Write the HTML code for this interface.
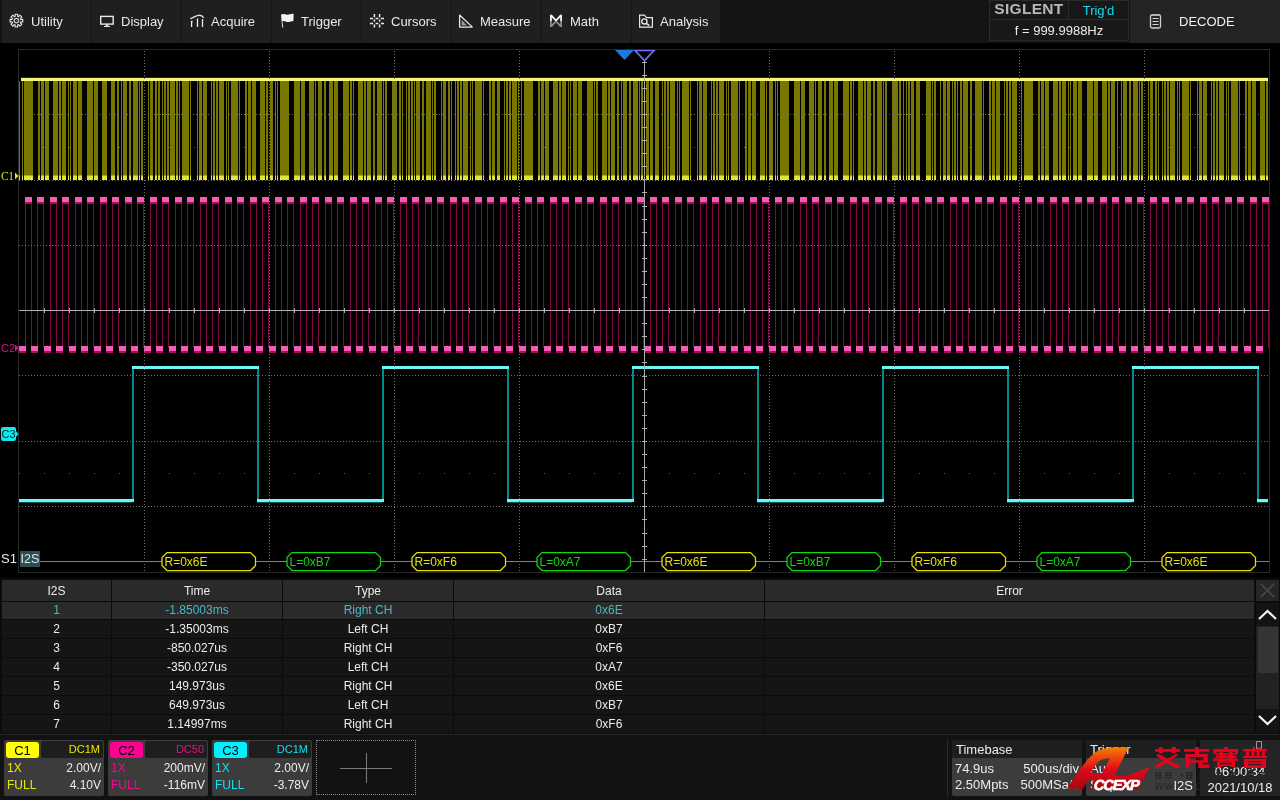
<!DOCTYPE html>
<html><head><meta charset="utf-8"><style>
html,body{margin:0;padding:0}
body{width:1280px;height:800px;background:#000;overflow:hidden;position:relative;font-family:"Liberation Sans", sans-serif}
div,span{box-sizing:border-box;white-space:nowrap}
#root{position:absolute;left:0;top:0;width:1280px;height:800px;will-change:transform}
</style></head><body><div id="root">
<div style="position:absolute;left:0;top:0;width:1280px;height:43px;background:#141414"></div>
<div style="position:absolute;left:2px;top:0;width:89px;height:43px;background:#1f1f1f"><svg width="30" height="43" viewBox="0 0 30 43" style="position:absolute;left:0;top:0"><path d="M13.05 14.24L15.75 14.24L15.60 16.26L16.62 16.68L17.94 15.15L19.85 17.06L18.32 18.38L18.74 19.40L20.76 19.25L20.76 21.95L18.74 21.80L18.32 22.82L19.85 24.14L17.94 26.05L16.62 24.52L15.60 24.94L15.75 26.96L13.05 26.96L13.20 24.94L12.18 24.52L10.86 26.05L8.95 24.14L10.48 22.82L10.06 21.80L8.04 21.95L8.04 19.25L10.06 19.40L10.48 18.38L8.95 17.06L10.86 15.15L12.18 16.68L13.20 16.26Z" fill="none" stroke="#e8e8e8" stroke-width="1.1" stroke-linejoin="round"/><circle cx="14.4" cy="20.6" r="2.2" fill="none" stroke="#c8c8c8" stroke-width="1.3"/><circle cx="14.4" cy="20.6" r="0.5" fill="#777"/></svg><span style="position:absolute;left:29px;top:13px;font-size:13px;line-height:17px;color:#e8e8e8">Utility</span></div>
<div style="position:absolute;left:92px;top:0;width:89px;height:43px;background:#1f1f1f"><svg width="30" height="43" viewBox="0 0 30 43" style="position:absolute;left:0;top:0"><rect x="8.7" y="16.4" width="12.5" height="7.7" fill="none" stroke="#e8e8e8" stroke-width="1.4"/><path d="M13.8 24.5h2.4v1.6h-2.4z M12 26.1h6v1h-6z" fill="#e8e8e8"/></svg><span style="position:absolute;left:29px;top:13px;font-size:13px;line-height:17px;color:#e8e8e8">Display</span></div>
<div style="position:absolute;left:182px;top:0;width:89px;height:43px;background:#1f1f1f"><svg width="30" height="43" viewBox="0 0 30 43" style="position:absolute;left:0;top:0"><path d="M8.3 18.6C11 18 13.5 15.6 16.8 15.3C19 15.1 20.8 16.3 21.7 17.9" fill="none" stroke="#e0e0e0" stroke-width="1.3"/><path d="M9.6 21V27M15.5 18.4V27M20.5 19V27" stroke="#ececec" stroke-width="1.3"/><path d="M8.8 21.3h1.8" stroke="#ececec" stroke-width="1"/></svg><span style="position:absolute;left:29px;top:13px;font-size:13px;line-height:17px;color:#e8e8e8">Acquire</span></div>
<div style="position:absolute;left:272px;top:0;width:89px;height:43px;background:#1f1f1f"><svg width="30" height="43" viewBox="0 0 30 43" style="position:absolute;left:0;top:0"><path d="M9 14.6C10.8 13.6 12.5 13.8 14.3 14.5C16.5 15.3 18.8 13.3 21.7 13.9L21.4 21.2C18.8 20.9 16.6 22.5 14.3 21.7C12.5 21 11 20.6 10.4 21.2L11.2 27.5H10.2Z" fill="#f4f4f4"/></svg><span style="position:absolute;left:29px;top:13px;font-size:13px;line-height:17px;color:#e8e8e8">Trigger</span></div>
<div style="position:absolute;left:362px;top:0;width:89px;height:43px;background:#1f1f1f"><svg width="30" height="43" viewBox="0 0 30 43" style="position:absolute;left:0;top:0"><g stroke="#ececec" stroke-width="1.5"><path d="M12.4 14v3.2M12.4 19.6v2.2M12.4 24.6v2.9M17.6 14v3.2M17.6 19.6v2.2M17.6 24.6v2.9M7.9 18.4h3.2M13.6 18.4h2.8M18.9 18.4h3.1M7.9 23.6h3.2M13.6 23.6h2.8M18.9 23.6h3.1"/></g></svg><span style="position:absolute;left:29px;top:13px;font-size:13px;line-height:17px;color:#e8e8e8">Cursors</span></div>
<div style="position:absolute;left:452px;top:0;width:89px;height:43px;background:#1f1f1f"><svg width="30" height="43" viewBox="0 0 30 43" style="position:absolute;left:0;top:0"><path d="M7.6 15V27.1H20.4Z" fill="none" stroke="#ececec" stroke-width="1.3" stroke-linejoin="bevel"/><path d="M9.6 19.8V25.4H15Z" fill="#9a9a9a"/></svg><span style="position:absolute;left:28px;top:13px;font-size:13px;line-height:17px;color:#e8e8e8">Measure</span></div>
<div style="position:absolute;left:542px;top:0;width:89px;height:43px;background:#1f1f1f"><svg width="30" height="43" viewBox="0 0 30 43" style="position:absolute;left:0;top:0"><path d="M8 21V14.8H9.9L14 19.2L18.1 14.8H20V21H18.2V17.6L14.8 21H13.2L9.8 17.6V21Z" fill="#f4f4f4"/><path d="M8 21V26.9H9.9L14 22.6L18.1 26.9H20V21H18.2V24.2L14.8 21H13.2L9.8 24.2V21Z" fill="#8c8c8c"/></svg><span style="position:absolute;left:28px;top:13px;font-size:13px;line-height:17px;color:#e8e8e8">Math</span></div>
<div style="position:absolute;left:632px;top:0;width:88px;height:43px;background:#1f1f1f"><svg width="30" height="43" viewBox="0 0 30 43" style="position:absolute;left:0;top:0"><path d="M7.6 15.2H12.3L14.6 17.6H20.4V27.1H7.6Z" fill="none" stroke="#e8e8e8" stroke-width="1.2"/><circle cx="12.4" cy="21.4" r="2.6" fill="none" stroke="#e8e8e8" stroke-width="1.3"/><path d="M14.2 23.3L17.4 25.6" stroke="#e8e8e8" stroke-width="1.5"/></svg><span style="position:absolute;left:28px;top:13px;font-size:13px;line-height:17px;color:#e8e8e8">Analysis</span></div>
<div style="position:absolute;left:989px;top:0;width:140px;height:41px;background:#2a2a2a"></div>
<div style="position:absolute;left:990px;top:1px;width:78px;height:18px;background:#181818"></div>
<div style="position:absolute;left:1069px;top:1px;width:59px;height:18px;background:#181818"></div>
<div style="position:absolute;left:990px;top:20px;width:138px;height:20px;background:#181818"></div>
<div style="position:absolute;left:992px;top:0px;width:74px;height:18px;font-weight:bold;font-size:15.5px;line-height:18px;color:#b8b8b8;text-align:center;letter-spacing:0.3px">SIGLENT</div>
<div style="position:absolute;left:1069px;top:2px;width:59px;height:18px;font-size:13px;line-height:18px;color:#12dcea;text-align:center">Trig'd</div>
<div style="position:absolute;left:990px;top:21px;width:138px;height:19px;font-size:13px;line-height:19px;color:#ececec;text-align:center">f = 999.9988Hz</div>
<div style="position:absolute;left:1130px;top:0;width:150px;height:43px;background:#242424"><svg width="14" height="16" viewBox="0 0 14 16" style="position:absolute;left:19px;top:13px"><rect x="1.5" y="2" width="10" height="13" rx="1.5" fill="none" stroke="#d0d0d0" stroke-width="1.3"/><path d="M3.5 5.5h6M3.5 8.5h6M3.5 11.5h6" stroke="#d0d0d0" stroke-width="1.2"/><path d="M4 1v1.5M6.5 1v1.5M9 1v1.5" stroke="#d0d0d0" stroke-width="1"/></svg><span style="position:absolute;left:49px;top:13px;font-size:13px;line-height:17px;color:#f0f0f0">DECODE</span></div>
<svg width="1280" height="580" viewBox="0 0 1280 580" style="position:absolute;left:0;top:0">
<path d="M19 81h1v95h-1z M22 81h1v95h-1z M24 81h9v95h-9z M38 81h2v95h-2z M41 81h3v95h-3z M45 81h4v95h-4z M53 81h5v95h-5z M59 81h2v95h-2z M62 81h4v95h-4z M68 81h1v95h-1z M70 81h1v95h-1z M73 81h4v95h-4z M78 81h4v95h-4z M87 81h6v95h-6z M94 81h4v95h-4z M102 81h5v95h-5z M111 81h4v95h-4z M117 81h2v95h-2z M121 81h1v95h-1z M123 81h4v95h-4z M129 81h2v95h-2z M133 81h5v95h-5z M139 81h1v95h-1z M141 81h2v95h-2z M148 81h1v95h-1z M150 81h3v95h-3z M155 81h2v95h-2z M158 81h2v95h-2z M162 81h1v95h-1z M164 81h2v95h-2z M167 81h2v95h-2z M170 81h5v95h-5z M176 81h2v95h-2z M179 81h1v95h-1z M182 81h7v95h-7z M190 81h1v95h-1z M197 81h1v95h-1z M199 81h3v95h-3z M203 81h4v95h-4z M211 81h1v95h-1z M213 81h2v95h-2z M216 81h2v95h-2z M219 81h5v95h-5z M226 81h1v95h-1z M228 81h1v95h-1z M231 81h7v95h-7z M239 81h1v95h-1z M245 81h2v95h-2z M248 81h3v95h-3z M252 81h4v95h-4z M260 81h5v95h-5z M266 81h2v95h-2z M270 81h3v95h-3z M275 81h1v95h-1z M277 81h1v95h-1z M280 81h9v95h-9z M294 81h6v95h-6z M301 81h4v95h-4z M309 81h5v95h-5z M315 81h1v95h-1z M318 81h4v95h-4z M324 81h2v95h-2z M329 81h4v95h-4z M334 81h4v95h-4z M343 81h6v95h-6z M350 81h2v95h-2z M353 81h1v95h-1z M358 81h5v95h-5z M364 81h2v95h-2z M367 81h4v95h-4z M373 81h2v95h-2z M377 81h5v95h-5z M383 81h1v95h-1z M385 81h2v95h-2z M392 81h5v95h-5z M399 81h2v95h-2z M402 81h1v95h-1z M406 81h1v95h-1z M408 81h2v95h-2z M411 81h2v95h-2z M414 81h1v95h-1z M416 81h4v95h-4z M422 81h2v95h-2z M426 81h5v95h-5z M432 81h1v95h-1z M434 81h2v95h-2z M441 81h1v95h-1z M443 81h3v95h-3z M448 81h2v95h-2z M451 81h1v95h-1z M455 81h1v95h-1z M457 81h2v95h-2z M460 81h2v95h-2z M463 81h5v95h-5z M470 81h1v95h-1z M472 81h1v95h-1z M475 81h7v95h-7z M483 81h1v95h-1z M489 81h2v95h-2z M492 81h3v95h-3z M497 81h3v95h-3z M504 81h1v95h-1z M506 81h2v95h-2z M509 81h2v95h-2z M512 81h5v95h-5z M518 81h1v95h-1z M521 81h1v95h-1z M524 81h9v95h-9z M538 81h2v95h-2z M541 81h3v95h-3z M545 81h4v95h-4z M553 81h5v95h-5z M559 81h2v95h-2z M562 81h4v95h-4z M568 81h1v95h-1z M570 81h1v95h-1z M573 81h4v95h-4z M578 81h4v95h-4z M587 81h6v95h-6z M594 81h1v95h-1z M596 81h2v95h-2z M602 81h5v95h-5z M608 81h2v95h-2z M611 81h4v95h-4z M617 81h2v95h-2z M621 81h1v95h-1z M623 81h4v95h-4z M629 81h2v95h-2z M633 81h5v95h-5z M639 81h1v95h-1z M641 81h2v95h-2z M646 81h3v95h-3z M650 81h3v95h-3z M655 81h4v95h-4z M662 81h1v95h-1z M664 81h2v95h-2z M667 81h2v95h-2z M670 81h5v95h-5z M677 81h1v95h-1z M679 81h1v95h-1z M682 81h7v95h-7z M690 81h1v95h-1z M697 81h1v95h-1z M699 81h3v95h-3z M703 81h4v95h-4z M711 81h1v95h-1z M713 81h2v95h-2z M716 81h2v95h-2z M719 81h5v95h-5z M726 81h1v95h-1z M728 81h1v95h-1z M731 81h7v95h-7z M739 81h1v95h-1z M745 81h2v95h-2z M748 81h3v95h-3z M752 81h4v95h-4z M760 81h5v95h-5z M766 81h1v95h-1z M769 81h4v95h-4z M775 81h1v95h-1z M777 81h1v95h-1z M780 81h9v95h-9z M794 81h6v95h-6z M801 81h4v95h-4z M809 81h5v95h-5z M815 81h1v95h-1z M818 81h4v95h-4z M824 81h2v95h-2z M829 81h4v95h-4z M834 81h4v95h-4z M843 81h6v95h-6z M850 81h2v95h-2z M853 81h1v95h-1z M858 81h5v95h-5z M864 81h2v95h-2z M867 81h4v95h-4z M873 81h2v95h-2z M877 81h5v95h-5z M883 81h1v95h-1z M885 81h2v95h-2z M892 81h6v95h-6z M899 81h2v95h-2z M903 81h1v95h-1z M906 81h1v95h-1z M908 81h2v95h-2z M911 81h3v95h-3z M916 81h4v95h-4z M926 81h5v95h-5z M932 81h1v95h-1z M934 81h2v95h-2z M940 81h1v95h-1z M943 81h3v95h-3z M947 81h3v95h-3z M952 81h1v95h-1z M954 81h2v95h-2z M957 81h1v95h-1z M960 81h2v95h-2z M963 81h5v95h-5z M970 81h2v95h-2z M975 81h7v95h-7z M983 81h1v95h-1z M989 81h2v95h-2z M992 81h3v95h-3z M996 81h4v95h-4z M1004 81h1v95h-1z M1006 81h2v95h-2z M1009 81h2v95h-2z M1012 81h5v95h-5z M1021 81h1v95h-1z M1024 81h9v95h-9z M1038 81h2v95h-2z M1041 81h3v95h-3z M1045 81h4v95h-4z M1053 81h5v95h-5z M1059 81h2v95h-2z M1062 81h4v95h-4z M1068 81h1v95h-1z M1070 81h1v95h-1z M1073 81h4v95h-4z M1078 81h4v95h-4z M1087 81h6v95h-6z M1094 81h4v95h-4z M1102 81h5v95h-5z M1108 81h2v95h-2z M1111 81h4v95h-4z M1117 81h1v95h-1z M1121 81h1v95h-1z M1123 81h4v95h-4z M1129 81h2v95h-2z M1133 81h5v95h-5z M1139 81h1v95h-1z M1141 81h2v95h-2z M1148 81h1v95h-1z M1150 81h3v95h-3z M1155 81h2v95h-2z M1158 81h1v95h-1z M1162 81h1v95h-1z M1164 81h2v95h-2z M1167 81h2v95h-2z M1170 81h5v95h-5z M1177 81h1v95h-1z M1179 81h1v95h-1z M1182 81h7v95h-7z M1190 81h1v95h-1z M1197 81h1v95h-1z M1199 81h3v95h-3z M1203 81h4v95h-4z M1211 81h1v95h-1z M1213 81h2v95h-2z M1216 81h2v95h-2z M1219 81h5v95h-5z M1226 81h1v95h-1z M1228 81h1v95h-1z M1231 81h7v95h-7z M1239 81h1v95h-1z M1245 81h2v95h-2z M1248 81h3v95h-3z M1252 81h4v95h-4z M1260 81h5v95h-5z M1266 81h2v95h-2z" fill="#787800"/>
<path d="M19 175.5h1v4.5h-1z M22 175.5h1v4.5h-1z M24 175.5h9v4.5h-9z M38 175.5h2v4.5h-2z M41 175.5h3v4.5h-3z M45 175.5h4v4.5h-4z M53 175.5h5v4.5h-5z M59 175.5h2v4.5h-2z M62 175.5h4v4.5h-4z M68 175.5h1v4.5h-1z M70 175.5h1v4.5h-1z M73 175.5h4v4.5h-4z M78 175.5h4v4.5h-4z M87 175.5h6v4.5h-6z M94 175.5h4v4.5h-4z M102 175.5h5v4.5h-5z M111 175.5h4v4.5h-4z M117 175.5h2v4.5h-2z M121 175.5h1v4.5h-1z M123 175.5h4v4.5h-4z M129 175.5h2v4.5h-2z M133 175.5h5v4.5h-5z M139 175.5h1v4.5h-1z M141 175.5h2v4.5h-2z M148 175.5h1v4.5h-1z M150 175.5h3v4.5h-3z M155 175.5h2v4.5h-2z M158 175.5h2v4.5h-2z M162 175.5h1v4.5h-1z M164 175.5h2v4.5h-2z M167 175.5h2v4.5h-2z M170 175.5h5v4.5h-5z M176 175.5h2v4.5h-2z M179 175.5h1v4.5h-1z M182 175.5h7v4.5h-7z M190 175.5h1v4.5h-1z M197 175.5h1v4.5h-1z M199 175.5h3v4.5h-3z M203 175.5h4v4.5h-4z M211 175.5h1v4.5h-1z M213 175.5h2v4.5h-2z M216 175.5h2v4.5h-2z M219 175.5h5v4.5h-5z M226 175.5h1v4.5h-1z M228 175.5h1v4.5h-1z M231 175.5h7v4.5h-7z M239 175.5h1v4.5h-1z M245 175.5h2v4.5h-2z M248 175.5h3v4.5h-3z M252 175.5h4v4.5h-4z M260 175.5h5v4.5h-5z M266 175.5h2v4.5h-2z M270 175.5h3v4.5h-3z M275 175.5h1v4.5h-1z M277 175.5h1v4.5h-1z M280 175.5h9v4.5h-9z M294 175.5h6v4.5h-6z M301 175.5h4v4.5h-4z M309 175.5h5v4.5h-5z M315 175.5h1v4.5h-1z M318 175.5h4v4.5h-4z M324 175.5h2v4.5h-2z M329 175.5h4v4.5h-4z M334 175.5h4v4.5h-4z M343 175.5h6v4.5h-6z M350 175.5h2v4.5h-2z M353 175.5h1v4.5h-1z M358 175.5h5v4.5h-5z M364 175.5h2v4.5h-2z M367 175.5h4v4.5h-4z M373 175.5h2v4.5h-2z M377 175.5h5v4.5h-5z M383 175.5h1v4.5h-1z M385 175.5h2v4.5h-2z M392 175.5h5v4.5h-5z M399 175.5h2v4.5h-2z M402 175.5h1v4.5h-1z M406 175.5h1v4.5h-1z M408 175.5h2v4.5h-2z M411 175.5h2v4.5h-2z M414 175.5h1v4.5h-1z M416 175.5h4v4.5h-4z M422 175.5h2v4.5h-2z M426 175.5h5v4.5h-5z M432 175.5h1v4.5h-1z M434 175.5h2v4.5h-2z M441 175.5h1v4.5h-1z M443 175.5h3v4.5h-3z M448 175.5h2v4.5h-2z M451 175.5h1v4.5h-1z M455 175.5h1v4.5h-1z M457 175.5h2v4.5h-2z M460 175.5h2v4.5h-2z M463 175.5h5v4.5h-5z M470 175.5h1v4.5h-1z M472 175.5h1v4.5h-1z M475 175.5h7v4.5h-7z M483 175.5h1v4.5h-1z M489 175.5h2v4.5h-2z M492 175.5h3v4.5h-3z M497 175.5h3v4.5h-3z M504 175.5h1v4.5h-1z M506 175.5h2v4.5h-2z M509 175.5h2v4.5h-2z M512 175.5h5v4.5h-5z M518 175.5h1v4.5h-1z M521 175.5h1v4.5h-1z M524 175.5h9v4.5h-9z M538 175.5h2v4.5h-2z M541 175.5h3v4.5h-3z M545 175.5h4v4.5h-4z M553 175.5h5v4.5h-5z M559 175.5h2v4.5h-2z M562 175.5h4v4.5h-4z M568 175.5h1v4.5h-1z M570 175.5h1v4.5h-1z M573 175.5h4v4.5h-4z M578 175.5h4v4.5h-4z M587 175.5h6v4.5h-6z M594 175.5h1v4.5h-1z M596 175.5h2v4.5h-2z M602 175.5h5v4.5h-5z M608 175.5h2v4.5h-2z M611 175.5h4v4.5h-4z M617 175.5h2v4.5h-2z M621 175.5h1v4.5h-1z M623 175.5h4v4.5h-4z M629 175.5h2v4.5h-2z M633 175.5h5v4.5h-5z M639 175.5h1v4.5h-1z M641 175.5h2v4.5h-2z M646 175.5h3v4.5h-3z M650 175.5h3v4.5h-3z M655 175.5h4v4.5h-4z M662 175.5h1v4.5h-1z M664 175.5h2v4.5h-2z M667 175.5h2v4.5h-2z M670 175.5h5v4.5h-5z M677 175.5h1v4.5h-1z M679 175.5h1v4.5h-1z M682 175.5h7v4.5h-7z M690 175.5h1v4.5h-1z M697 175.5h1v4.5h-1z M699 175.5h3v4.5h-3z M703 175.5h4v4.5h-4z M711 175.5h1v4.5h-1z M713 175.5h2v4.5h-2z M716 175.5h2v4.5h-2z M719 175.5h5v4.5h-5z M726 175.5h1v4.5h-1z M728 175.5h1v4.5h-1z M731 175.5h7v4.5h-7z M739 175.5h1v4.5h-1z M745 175.5h2v4.5h-2z M748 175.5h3v4.5h-3z M752 175.5h4v4.5h-4z M760 175.5h5v4.5h-5z M766 175.5h1v4.5h-1z M769 175.5h4v4.5h-4z M775 175.5h1v4.5h-1z M777 175.5h1v4.5h-1z M780 175.5h9v4.5h-9z M794 175.5h6v4.5h-6z M801 175.5h4v4.5h-4z M809 175.5h5v4.5h-5z M815 175.5h1v4.5h-1z M818 175.5h4v4.5h-4z M824 175.5h2v4.5h-2z M829 175.5h4v4.5h-4z M834 175.5h4v4.5h-4z M843 175.5h6v4.5h-6z M850 175.5h2v4.5h-2z M853 175.5h1v4.5h-1z M858 175.5h5v4.5h-5z M864 175.5h2v4.5h-2z M867 175.5h4v4.5h-4z M873 175.5h2v4.5h-2z M877 175.5h5v4.5h-5z M883 175.5h1v4.5h-1z M885 175.5h2v4.5h-2z M892 175.5h6v4.5h-6z M899 175.5h2v4.5h-2z M903 175.5h1v4.5h-1z M906 175.5h1v4.5h-1z M908 175.5h2v4.5h-2z M911 175.5h3v4.5h-3z M916 175.5h4v4.5h-4z M926 175.5h5v4.5h-5z M932 175.5h1v4.5h-1z M934 175.5h2v4.5h-2z M940 175.5h1v4.5h-1z M943 175.5h3v4.5h-3z M947 175.5h3v4.5h-3z M952 175.5h1v4.5h-1z M954 175.5h2v4.5h-2z M957 175.5h1v4.5h-1z M960 175.5h2v4.5h-2z M963 175.5h5v4.5h-5z M970 175.5h2v4.5h-2z M975 175.5h7v4.5h-7z M983 175.5h1v4.5h-1z M989 175.5h2v4.5h-2z M992 175.5h3v4.5h-3z M996 175.5h4v4.5h-4z M1004 175.5h1v4.5h-1z M1006 175.5h2v4.5h-2z M1009 175.5h2v4.5h-2z M1012 175.5h5v4.5h-5z M1021 175.5h1v4.5h-1z M1024 175.5h9v4.5h-9z M1038 175.5h2v4.5h-2z M1041 175.5h3v4.5h-3z M1045 175.5h4v4.5h-4z M1053 175.5h5v4.5h-5z M1059 175.5h2v4.5h-2z M1062 175.5h4v4.5h-4z M1068 175.5h1v4.5h-1z M1070 175.5h1v4.5h-1z M1073 175.5h4v4.5h-4z M1078 175.5h4v4.5h-4z M1087 175.5h6v4.5h-6z M1094 175.5h4v4.5h-4z M1102 175.5h5v4.5h-5z M1108 175.5h2v4.5h-2z M1111 175.5h4v4.5h-4z M1117 175.5h1v4.5h-1z M1121 175.5h1v4.5h-1z M1123 175.5h4v4.5h-4z M1129 175.5h2v4.5h-2z M1133 175.5h5v4.5h-5z M1139 175.5h1v4.5h-1z M1141 175.5h2v4.5h-2z M1148 175.5h1v4.5h-1z M1150 175.5h3v4.5h-3z M1155 175.5h2v4.5h-2z M1158 175.5h1v4.5h-1z M1162 175.5h1v4.5h-1z M1164 175.5h2v4.5h-2z M1167 175.5h2v4.5h-2z M1170 175.5h5v4.5h-5z M1177 175.5h1v4.5h-1z M1179 175.5h1v4.5h-1z M1182 175.5h7v4.5h-7z M1190 175.5h1v4.5h-1z M1197 175.5h1v4.5h-1z M1199 175.5h3v4.5h-3z M1203 175.5h4v4.5h-4z M1211 175.5h1v4.5h-1z M1213 175.5h2v4.5h-2z M1216 175.5h2v4.5h-2z M1219 175.5h5v4.5h-5z M1226 175.5h1v4.5h-1z M1228 175.5h1v4.5h-1z M1231 175.5h7v4.5h-7z M1239 175.5h1v4.5h-1z M1245 175.5h2v4.5h-2z M1248 175.5h3v4.5h-3z M1252 175.5h4v4.5h-4z M1260 175.5h5v4.5h-5z M1266 175.5h2v4.5h-2z" fill="#e4e434"/>
<rect x="21" y="78" width="1247" height="3" fill="#f6f678"/><rect x="21" y="77" width="1247" height="1" fill="#f6f678" opacity="0.15"/>
<path d="M25.5 200v148 M31.5 200v148 M37.5 200v148 M43.5 200v148 M50.5 200v148 M56.5 200v148 M62.5 200v148 M68.5 200v148 M75.5 200v148 M81.5 200v148 M87.5 200v148 M93.5 200v148 M100.5 200v148 M106.5 200v148 M112.5 200v148 M118.5 200v148 M125.5 200v148 M131.5 200v148 M137.5 200v148 M143.5 200v148 M150.5 200v148 M156.5 200v148 M162.5 200v148 M168.5 200v148 M175.5 200v148 M181.5 200v148 M187.5 200v148 M193.5 200v148 M200.5 200v148 M206.5 200v148 M212.5 200v148 M218.5 200v148 M225.5 200v148 M231.5 200v148 M237.5 200v148 M243.5 200v148 M250.5 200v148 M256.5 200v148 M262.5 200v148 M268.5 200v148 M275.5 200v148 M281.5 200v148 M287.5 200v148 M293.5 200v148 M300.5 200v148 M306.5 200v148 M312.5 200v148 M318.5 200v148 M325.5 200v148 M331.5 200v148 M337.5 200v148 M343.5 200v148 M350.5 200v148 M356.5 200v148 M362.5 200v148 M368.5 200v148 M375.5 200v148 M381.5 200v148 M387.5 200v148 M393.5 200v148 M400.5 200v148 M406.5 200v148 M412.5 200v148 M418.5 200v148 M425.5 200v148 M431.5 200v148 M437.5 200v148 M443.5 200v148 M450.5 200v148 M456.5 200v148 M462.5 200v148 M468.5 200v148 M475.5 200v148 M481.5 200v148 M487.5 200v148 M493.5 200v148 M500.5 200v148 M506.5 200v148 M512.5 200v148 M518.5 200v148 M525.5 200v148 M531.5 200v148 M537.5 200v148 M543.5 200v148 M550.5 200v148 M556.5 200v148 M562.5 200v148 M568.5 200v148 M575.5 200v148 M581.5 200v148 M587.5 200v148 M593.5 200v148 M600.5 200v148 M606.5 200v148 M612.5 200v148 M618.5 200v148 M625.5 200v148 M631.5 200v148 M637.5 200v148 M643.5 200v148 M650.5 200v148 M656.5 200v148 M662.5 200v148 M668.5 200v148 M675.5 200v148 M681.5 200v148 M687.5 200v148 M693.5 200v148 M700.5 200v148 M706.5 200v148 M712.5 200v148 M718.5 200v148 M725.5 200v148 M731.5 200v148 M737.5 200v148 M743.5 200v148 M750.5 200v148 M756.5 200v148 M762.5 200v148 M768.5 200v148 M775.5 200v148 M781.5 200v148 M787.5 200v148 M793.5 200v148 M800.5 200v148 M806.5 200v148 M812.5 200v148 M818.5 200v148 M825.5 200v148 M831.5 200v148 M837.5 200v148 M843.5 200v148 M850.5 200v148 M856.5 200v148 M862.5 200v148 M868.5 200v148 M875.5 200v148 M881.5 200v148 M887.5 200v148 M893.5 200v148 M900.5 200v148 M906.5 200v148 M912.5 200v148 M918.5 200v148 M925.5 200v148 M931.5 200v148 M937.5 200v148 M943.5 200v148 M950.5 200v148 M956.5 200v148 M962.5 200v148 M968.5 200v148 M975.5 200v148 M981.5 200v148 M987.5 200v148 M993.5 200v148 M1000.5 200v148 M1006.5 200v148 M1012.5 200v148 M1018.5 200v148 M1025.5 200v148 M1031.5 200v148 M1037.5 200v148 M1043.5 200v148 M1050.5 200v148 M1056.5 200v148 M1062.5 200v148 M1068.5 200v148 M1075.5 200v148 M1081.5 200v148 M1087.5 200v148 M1093.5 200v148 M1100.5 200v148 M1106.5 200v148 M1112.5 200v148 M1118.5 200v148 M1125.5 200v148 M1131.5 200v148 M1137.5 200v148 M1143.5 200v148 M1150.5 200v148 M1156.5 200v148 M1162.5 200v148 M1168.5 200v148 M1175.5 200v148 M1181.5 200v148 M1187.5 200v148 M1193.5 200v148 M1200.5 200v148 M1206.5 200v148 M1212.5 200v148 M1218.5 200v148 M1225.5 200v148 M1231.5 200v148 M1237.5 200v148 M1243.5 200v148 M1250.5 200v148 M1256.5 200v148 M1262.5 200v148 M1268.5 200v148" stroke="#800846" stroke-width="1" fill="none" shape-rendering="crispEdges"/>
<path d="M25 202h7v2h-7z M37 202h7v2h-7z M50 202h7v2h-7z M62 202h7v2h-7z M75 202h7v2h-7z M87 202h7v2h-7z M100 202h7v2h-7z M112 202h7v2h-7z M125 202h7v2h-7z M137 202h7v2h-7z M150 202h7v2h-7z M162 202h7v2h-7z M175 202h7v2h-7z M187 202h7v2h-7z M200 202h7v2h-7z M212 202h7v2h-7z M225 202h7v2h-7z M237 202h7v2h-7z M250 202h7v2h-7z M262 202h7v2h-7z M275 202h7v2h-7z M287 202h7v2h-7z M300 202h7v2h-7z M312 202h7v2h-7z M325 202h7v2h-7z M337 202h7v2h-7z M350 202h7v2h-7z M362 202h7v2h-7z M375 202h7v2h-7z M387 202h7v2h-7z M400 202h7v2h-7z M412 202h7v2h-7z M425 202h7v2h-7z M437 202h7v2h-7z M450 202h7v2h-7z M462 202h7v2h-7z M475 202h7v2h-7z M487 202h7v2h-7z M500 202h7v2h-7z M512 202h7v2h-7z M525 202h7v2h-7z M537 202h7v2h-7z M550 202h7v2h-7z M562 202h7v2h-7z M575 202h7v2h-7z M587 202h7v2h-7z M600 202h7v2h-7z M612 202h7v2h-7z M625 202h7v2h-7z M637 202h7v2h-7z M650 202h7v2h-7z M662 202h7v2h-7z M675 202h7v2h-7z M687 202h7v2h-7z M700 202h7v2h-7z M712 202h7v2h-7z M725 202h7v2h-7z M737 202h7v2h-7z M750 202h7v2h-7z M762 202h7v2h-7z M775 202h7v2h-7z M787 202h7v2h-7z M800 202h7v2h-7z M812 202h7v2h-7z M825 202h7v2h-7z M837 202h7v2h-7z M850 202h7v2h-7z M862 202h7v2h-7z M875 202h7v2h-7z M887 202h7v2h-7z M900 202h7v2h-7z M912 202h7v2h-7z M925 202h7v2h-7z M937 202h7v2h-7z M950 202h7v2h-7z M962 202h7v2h-7z M975 202h7v2h-7z M987 202h7v2h-7z M1000 202h7v2h-7z M1012 202h7v2h-7z M1025 202h7v2h-7z M1037 202h7v2h-7z M1050 202h7v2h-7z M1062 202h7v2h-7z M1075 202h7v2h-7z M1087 202h7v2h-7z M1100 202h7v2h-7z M1112 202h7v2h-7z M1125 202h7v2h-7z M1137 202h7v2h-7z M1150 202h7v2h-7z M1162 202h7v2h-7z M1175 202h7v2h-7z M1187 202h7v2h-7z M1200 202h7v2h-7z M1212 202h7v2h-7z M1225 202h7v2h-7z M1237 202h7v2h-7z M1250 202h7v2h-7z M1262 202h7v2h-7z M19 350.5h7v2h-7z M31 350.5h7v2h-7z M44 350.5h7v2h-7z M56 350.5h7v2h-7z M69 350.5h7v2h-7z M81 350.5h7v2h-7z M94 350.5h7v2h-7z M106 350.5h7v2h-7z M119 350.5h7v2h-7z M131 350.5h7v2h-7z M144 350.5h7v2h-7z M156 350.5h7v2h-7z M169 350.5h7v2h-7z M181 350.5h7v2h-7z M194 350.5h7v2h-7z M206 350.5h7v2h-7z M219 350.5h7v2h-7z M231 350.5h7v2h-7z M244 350.5h7v2h-7z M256 350.5h7v2h-7z M269 350.5h7v2h-7z M281 350.5h7v2h-7z M294 350.5h7v2h-7z M306 350.5h7v2h-7z M319 350.5h7v2h-7z M331 350.5h7v2h-7z M344 350.5h7v2h-7z M356 350.5h7v2h-7z M369 350.5h7v2h-7z M381 350.5h7v2h-7z M394 350.5h7v2h-7z M406 350.5h7v2h-7z M419 350.5h7v2h-7z M431 350.5h7v2h-7z M444 350.5h7v2h-7z M456 350.5h7v2h-7z M469 350.5h7v2h-7z M481 350.5h7v2h-7z M494 350.5h7v2h-7z M506 350.5h7v2h-7z M519 350.5h7v2h-7z M531 350.5h7v2h-7z M544 350.5h7v2h-7z M556 350.5h7v2h-7z M569 350.5h7v2h-7z M581 350.5h7v2h-7z M594 350.5h7v2h-7z M606 350.5h7v2h-7z M619 350.5h7v2h-7z M631 350.5h7v2h-7z M644 350.5h7v2h-7z M656 350.5h7v2h-7z M669 350.5h7v2h-7z M681 350.5h7v2h-7z M694 350.5h7v2h-7z M706 350.5h7v2h-7z M719 350.5h7v2h-7z M731 350.5h7v2h-7z M744 350.5h7v2h-7z M756 350.5h7v2h-7z M769 350.5h7v2h-7z M781 350.5h7v2h-7z M794 350.5h7v2h-7z M806 350.5h7v2h-7z M819 350.5h7v2h-7z M831 350.5h7v2h-7z M844 350.5h7v2h-7z M856 350.5h7v2h-7z M869 350.5h7v2h-7z M881 350.5h7v2h-7z M894 350.5h7v2h-7z M906 350.5h7v2h-7z M919 350.5h7v2h-7z M931 350.5h7v2h-7z M944 350.5h7v2h-7z M956 350.5h7v2h-7z M969 350.5h7v2h-7z M981 350.5h7v2h-7z M994 350.5h7v2h-7z M1006 350.5h7v2h-7z M1019 350.5h7v2h-7z M1031 350.5h7v2h-7z M1044 350.5h7v2h-7z M1056 350.5h7v2h-7z M1069 350.5h7v2h-7z M1081 350.5h7v2h-7z M1094 350.5h7v2h-7z M1106 350.5h7v2h-7z M1119 350.5h7v2h-7z M1131 350.5h7v2h-7z M1144 350.5h7v2h-7z M1156 350.5h7v2h-7z M1169 350.5h7v2h-7z M1181 350.5h7v2h-7z M1194 350.5h7v2h-7z M1206 350.5h7v2h-7z M1219 350.5h7v2h-7z M1231 350.5h7v2h-7z M1244 350.5h7v2h-7z M1256 350.5h7v2h-7z" fill="#a8105e" shape-rendering="crispEdges"/>
<path d="M25 197h7v5h-7z M37 197h7v5h-7z M50 197h7v5h-7z M62 197h7v5h-7z M75 197h7v5h-7z M87 197h7v5h-7z M100 197h7v5h-7z M112 197h7v5h-7z M125 197h7v5h-7z M137 197h7v5h-7z M150 197h7v5h-7z M162 197h7v5h-7z M175 197h7v5h-7z M187 197h7v5h-7z M200 197h7v5h-7z M212 197h7v5h-7z M225 197h7v5h-7z M237 197h7v5h-7z M250 197h7v5h-7z M262 197h7v5h-7z M275 197h7v5h-7z M287 197h7v5h-7z M300 197h7v5h-7z M312 197h7v5h-7z M325 197h7v5h-7z M337 197h7v5h-7z M350 197h7v5h-7z M362 197h7v5h-7z M375 197h7v5h-7z M387 197h7v5h-7z M400 197h7v5h-7z M412 197h7v5h-7z M425 197h7v5h-7z M437 197h7v5h-7z M450 197h7v5h-7z M462 197h7v5h-7z M475 197h7v5h-7z M487 197h7v5h-7z M500 197h7v5h-7z M512 197h7v5h-7z M525 197h7v5h-7z M537 197h7v5h-7z M550 197h7v5h-7z M562 197h7v5h-7z M575 197h7v5h-7z M587 197h7v5h-7z M600 197h7v5h-7z M612 197h7v5h-7z M625 197h7v5h-7z M637 197h7v5h-7z M650 197h7v5h-7z M662 197h7v5h-7z M675 197h7v5h-7z M687 197h7v5h-7z M700 197h7v5h-7z M712 197h7v5h-7z M725 197h7v5h-7z M737 197h7v5h-7z M750 197h7v5h-7z M762 197h7v5h-7z M775 197h7v5h-7z M787 197h7v5h-7z M800 197h7v5h-7z M812 197h7v5h-7z M825 197h7v5h-7z M837 197h7v5h-7z M850 197h7v5h-7z M862 197h7v5h-7z M875 197h7v5h-7z M887 197h7v5h-7z M900 197h7v5h-7z M912 197h7v5h-7z M925 197h7v5h-7z M937 197h7v5h-7z M950 197h7v5h-7z M962 197h7v5h-7z M975 197h7v5h-7z M987 197h7v5h-7z M1000 197h7v5h-7z M1012 197h7v5h-7z M1025 197h7v5h-7z M1037 197h7v5h-7z M1050 197h7v5h-7z M1062 197h7v5h-7z M1075 197h7v5h-7z M1087 197h7v5h-7z M1100 197h7v5h-7z M1112 197h7v5h-7z M1125 197h7v5h-7z M1137 197h7v5h-7z M1150 197h7v5h-7z M1162 197h7v5h-7z M1175 197h7v5h-7z M1187 197h7v5h-7z M1200 197h7v5h-7z M1212 197h7v5h-7z M1225 197h7v5h-7z M1237 197h7v5h-7z M1250 197h7v5h-7z M1262 197h7v5h-7z" fill="#f85ab8" shape-rendering="crispEdges"/>
<path d="M19 345.5h7v5h-7z M31 345.5h7v5h-7z M44 345.5h7v5h-7z M56 345.5h7v5h-7z M69 345.5h7v5h-7z M81 345.5h7v5h-7z M94 345.5h7v5h-7z M106 345.5h7v5h-7z M119 345.5h7v5h-7z M131 345.5h7v5h-7z M144 345.5h7v5h-7z M156 345.5h7v5h-7z M169 345.5h7v5h-7z M181 345.5h7v5h-7z M194 345.5h7v5h-7z M206 345.5h7v5h-7z M219 345.5h7v5h-7z M231 345.5h7v5h-7z M244 345.5h7v5h-7z M256 345.5h7v5h-7z M269 345.5h7v5h-7z M281 345.5h7v5h-7z M294 345.5h7v5h-7z M306 345.5h7v5h-7z M319 345.5h7v5h-7z M331 345.5h7v5h-7z M344 345.5h7v5h-7z M356 345.5h7v5h-7z M369 345.5h7v5h-7z M381 345.5h7v5h-7z M394 345.5h7v5h-7z M406 345.5h7v5h-7z M419 345.5h7v5h-7z M431 345.5h7v5h-7z M444 345.5h7v5h-7z M456 345.5h7v5h-7z M469 345.5h7v5h-7z M481 345.5h7v5h-7z M494 345.5h7v5h-7z M506 345.5h7v5h-7z M519 345.5h7v5h-7z M531 345.5h7v5h-7z M544 345.5h7v5h-7z M556 345.5h7v5h-7z M569 345.5h7v5h-7z M581 345.5h7v5h-7z M594 345.5h7v5h-7z M606 345.5h7v5h-7z M619 345.5h7v5h-7z M631 345.5h7v5h-7z M644 345.5h7v5h-7z M656 345.5h7v5h-7z M669 345.5h7v5h-7z M681 345.5h7v5h-7z M694 345.5h7v5h-7z M706 345.5h7v5h-7z M719 345.5h7v5h-7z M731 345.5h7v5h-7z M744 345.5h7v5h-7z M756 345.5h7v5h-7z M769 345.5h7v5h-7z M781 345.5h7v5h-7z M794 345.5h7v5h-7z M806 345.5h7v5h-7z M819 345.5h7v5h-7z M831 345.5h7v5h-7z M844 345.5h7v5h-7z M856 345.5h7v5h-7z M869 345.5h7v5h-7z M881 345.5h7v5h-7z M894 345.5h7v5h-7z M906 345.5h7v5h-7z M919 345.5h7v5h-7z M931 345.5h7v5h-7z M944 345.5h7v5h-7z M956 345.5h7v5h-7z M969 345.5h7v5h-7z M981 345.5h7v5h-7z M994 345.5h7v5h-7z M1006 345.5h7v5h-7z M1019 345.5h7v5h-7z M1031 345.5h7v5h-7z M1044 345.5h7v5h-7z M1056 345.5h7v5h-7z M1069 345.5h7v5h-7z M1081 345.5h7v5h-7z M1094 345.5h7v5h-7z M1106 345.5h7v5h-7z M1119 345.5h7v5h-7z M1131 345.5h7v5h-7z M1144 345.5h7v5h-7z M1156 345.5h7v5h-7z M1169 345.5h7v5h-7z M1181 345.5h7v5h-7z M1194 345.5h7v5h-7z M1206 345.5h7v5h-7z M1219 345.5h7v5h-7z M1231 345.5h7v5h-7z M1244 345.5h7v5h-7z M1256 345.5h7v5h-7z" fill="#f85ab8" shape-rendering="crispEdges"/>
<path d="M132 366h2v136h-2z M257 366h2v136h-2z M382 366h2v136h-2z M507 366h2v136h-2z M632 366h2v136h-2z M757 366h2v136h-2z M882 366h2v136h-2z M1007 366h2v136h-2z M1132 366h2v136h-2z M1257 366h2v136h-2z" fill="#068a8e" shape-rendering="crispEdges"/>
<path d="M19 502H132v1H19z M257 502H382v1H257z M507 502H632v1H507z M757 502H882v1H757z M1007 502H1132v1H1007z M1257 502H1268v1H1257z" fill="#048484" opacity="0.6" shape-rendering="crispEdges"/>
<path d="M19 499H134v3H19z M132 366H259v3H132z M257 499H384v3H257z M382 366H509v3H382z M507 499H634v3H507z M632 366H759v3H632z M757 499H884v3H757z M882 366H1009v3H882z M1007 499H1134v3H1007z M1132 366H1259v3H1132z M1257 499H1268v3H1257z" fill="#6ef6f6" shape-rendering="crispEdges"/>
<path d="M615 50H634L624.5 60Z" fill="#1a7ae0"/>
<path d="M635 50.5H654L644.5 60.5Z" fill="none" stroke="#7a70ff" stroke-width="1.6"/>
<line x1="40" y1="561.5" x2="1269" y2="561.5" stroke="#12a6e6" stroke-width="1.2"/>
<path d="M167 552.5H250.5L255.5 557.5V565.5L250.5 570.5H167L162 565.5V557.5Z" fill="#000" stroke="#e8e000" stroke-width="1.25"/>
<text x="164.5" y="565.8" fill="#e8e000" font-family="Liberation Sans" font-size="12">R=0x6E</text>
<path d="M292 552.5H375.5L380.5 557.5V565.5L375.5 570.5H292L287 565.5V557.5Z" fill="#000" stroke="#10d810" stroke-width="1.25"/>
<text x="289.5" y="565.8" fill="#10d810" font-family="Liberation Sans" font-size="12">L=0xB7</text>
<path d="M417 552.5H500.5L505.5 557.5V565.5L500.5 570.5H417L412 565.5V557.5Z" fill="#000" stroke="#e8e000" stroke-width="1.25"/>
<text x="414.5" y="565.8" fill="#e8e000" font-family="Liberation Sans" font-size="12">R=0xF6</text>
<path d="M542 552.5H625.5L630.5 557.5V565.5L625.5 570.5H542L537 565.5V557.5Z" fill="#000" stroke="#10d810" stroke-width="1.25"/>
<text x="539.5" y="565.8" fill="#10d810" font-family="Liberation Sans" font-size="12">L=0xA7</text>
<path d="M667 552.5H750.5L755.5 557.5V565.5L750.5 570.5H667L662 565.5V557.5Z" fill="#000" stroke="#e8e000" stroke-width="1.25"/>
<text x="664.5" y="565.8" fill="#e8e000" font-family="Liberation Sans" font-size="12">R=0x6E</text>
<path d="M792 552.5H875.5L880.5 557.5V565.5L875.5 570.5H792L787 565.5V557.5Z" fill="#000" stroke="#10d810" stroke-width="1.25"/>
<text x="789.5" y="565.8" fill="#10d810" font-family="Liberation Sans" font-size="12">L=0xB7</text>
<path d="M917 552.5H1000.5L1005.5 557.5V565.5L1000.5 570.5H917L912 565.5V557.5Z" fill="#000" stroke="#e8e000" stroke-width="1.25"/>
<text x="914.5" y="565.8" fill="#e8e000" font-family="Liberation Sans" font-size="12">R=0xF6</text>
<path d="M1042 552.5H1125.5L1130.5 557.5V565.5L1125.5 570.5H1042L1037 565.5V557.5Z" fill="#000" stroke="#10d810" stroke-width="1.25"/>
<text x="1039.5" y="565.8" fill="#10d810" font-family="Liberation Sans" font-size="12">L=0xA7</text>
<path d="M1167 552.5H1250.5L1255.5 557.5V565.5L1250.5 570.5H1167L1162 565.5V557.5Z" fill="#000" stroke="#e8e000" stroke-width="1.25"/>
<text x="1164.5" y="565.8" fill="#e8e000" font-family="Liberation Sans" font-size="12">R=0x6E</text>
</svg>
<svg width="1280" height="580" viewBox="0 0 1280 580" style="position:absolute;left:0;top:0" shape-rendering="crispEdges">
<rect x="18.5" y="49.5" width="1251" height="523" fill="none" stroke="#282828" stroke-width="1"/>
<line x1="144.5" y1="51" x2="144.5" y2="572" stroke="#6e6e6e" stroke-width="1" stroke-dasharray="1 2"/>
<line x1="269.5" y1="51" x2="269.5" y2="572" stroke="#6e6e6e" stroke-width="1" stroke-dasharray="1 2"/>
<line x1="394.5" y1="51" x2="394.5" y2="572" stroke="#6e6e6e" stroke-width="1" stroke-dasharray="1 2"/>
<line x1="519.5" y1="51" x2="519.5" y2="572" stroke="#6e6e6e" stroke-width="1" stroke-dasharray="1 2"/>
<line x1="769.5" y1="51" x2="769.5" y2="572" stroke="#6e6e6e" stroke-width="1" stroke-dasharray="1 2"/>
<line x1="894.5" y1="51" x2="894.5" y2="572" stroke="#6e6e6e" stroke-width="1" stroke-dasharray="1 2"/>
<line x1="1019.5" y1="51" x2="1019.5" y2="572" stroke="#6e6e6e" stroke-width="1" stroke-dasharray="1 2"/>
<line x1="1144.5" y1="51" x2="1144.5" y2="572" stroke="#6e6e6e" stroke-width="1" stroke-dasharray="1 2"/>
<line x1="19" y1="114.5" x2="1269" y2="114.5" stroke="#6e6e6e" stroke-width="1" stroke-dasharray="1 2"/>
<line x1="19" y1="180.5" x2="1269" y2="180.5" stroke="#6e6e6e" stroke-width="1" stroke-dasharray="1 2"/>
<line x1="19" y1="245.5" x2="1269" y2="245.5" stroke="#6e6e6e" stroke-width="1" stroke-dasharray="1 2"/>
<line x1="19" y1="375.5" x2="1269" y2="375.5" stroke="#6e6e6e" stroke-width="1" stroke-dasharray="1 2"/>
<line x1="19" y1="441.5" x2="1269" y2="441.5" stroke="#6e6e6e" stroke-width="1" stroke-dasharray="1 2"/>
<line x1="19" y1="506.5" x2="1269" y2="506.5" stroke="#6e6e6e" stroke-width="1" stroke-dasharray="1 2"/>
<line x1="19" y1="147.5" x2="1269" y2="147.5" stroke="#5a5a5a" stroke-width="1" stroke-dasharray="1 24" stroke-dashoffset="0"/>
<line x1="19" y1="473.5" x2="1269" y2="473.5" stroke="#5a5a5a" stroke-width="1" stroke-dasharray="1 24" stroke-dashoffset="0"/>
<line x1="644.5" y1="61" x2="644.5" y2="572" stroke="#a8a8a8" stroke-width="1"/>
<line x1="19" y1="310.5" x2="1269" y2="310.5" stroke="#b0b0b0" stroke-width="1"/>
<path d="M642 62.1h5 M642 75.2h5 M642 88.2h5 M642 101.3h5 M642 114.4h5 M642 127.5h5 M642 140.6h5 M642 153.6h5 M642 166.7h5 M642 179.8h5 M642 192.9h5 M642 206.0h5 M642 219.0h5 M642 232.1h5 M642 245.2h5 M642 258.3h5 M642 271.4h5 M642 284.4h5 M642 297.5h5 M642 310.6h5 M642 323.7h5 M642 336.8h5 M642 349.8h5 M642 362.9h5 M642 376.0h5 M642 389.1h5 M642 402.2h5 M642 415.2h5 M642 428.3h5 M642 441.4h5 M642 454.5h5 M642 467.6h5 M642 480.6h5 M642 493.7h5 M642 506.8h5 M642 519.9h5 M642 533.0h5 M642 546.0h5 M642 559.1h5 M44.5 308v5 M69.5 308v5 M94.5 308v5 M119.5 308v5 M144.5 308v5 M169.5 308v5 M194.5 308v5 M219.5 308v5 M244.5 308v5 M269.5 308v5 M294.5 308v5 M319.5 308v5 M344.5 308v5 M369.5 308v5 M394.5 308v5 M419.5 308v5 M444.5 308v5 M469.5 308v5 M494.5 308v5 M519.5 308v5 M544.5 308v5 M569.5 308v5 M594.5 308v5 M619.5 308v5 M644.5 308v5 M669.5 308v5 M694.5 308v5 M719.5 308v5 M744.5 308v5 M769.5 308v5 M794.5 308v5 M819.5 308v5 M844.5 308v5 M869.5 308v5 M894.5 308v5 M919.5 308v5 M944.5 308v5 M969.5 308v5 M994.5 308v5 M1019.5 308v5 M1044.5 308v5 M1069.5 308v5 M1094.5 308v5 M1119.5 308v5 M1144.5 308v5 M1169.5 308v5 M1194.5 308v5 M1219.5 308v5 M1244.5 308v5" stroke="#b0b0b0" stroke-width="1" fill="none"/>
</svg>
<div style="position:absolute;left:1px;top:169px;font-family:'Liberation Serif',serif;font-size:11.5px;line-height:14px;letter-spacing:-0.4px;color:#e0e000">C1</div>
<svg width="6" height="8" style="position:absolute;left:15px;top:172px"><path d="M0 0.5L3.5 4L0 7.5Z" fill="#e8e800"/></svg>
<div style="position:absolute;left:1px;top:341px;font-size:11px;line-height:14px;color:#e0108a">C2</div>
<svg width="6" height="8" style="position:absolute;left:15px;top:344px"><path d="M0 0.5L3.5 4L0 7.5Z" fill="#e8108a"/></svg>
<div style="position:absolute;left:1px;top:427px;width:15px;height:14px;background:#10e8f0;border-radius:2px;font-size:11px;line-height:14px;color:#0a2a2a;text-align:center">C3</div>
<svg width="6" height="8" style="position:absolute;left:15px;top:430px"><path d="M0.5 0.5L3.5 4L0.5 7.5Z" fill="#10e8f0"/></svg>
<div style="position:absolute;left:1px;top:551px;font-size:13px;line-height:16px;color:#ececec">S1</div>
<div style="position:absolute;left:20px;top:551px;width:20px;height:16px;background:#2a4f55;font-size:12.5px;line-height:16px;color:#e4e4e4;text-align:center">I2S</div>
<div style="position:absolute;left:0;top:578px;width:1280px;height:156px;background:#0b0b0b"></div>
<div style="position:absolute;left:2px;top:580px;width:109px;height:21px;background:#2a2a2a;font-size:12px;line-height:23px;color:#ececec;text-align:center">I2S</div>
<div style="position:absolute;left:112px;top:580px;width:170px;height:21px;background:#2a2a2a;font-size:12px;line-height:23px;color:#ececec;text-align:center">Time</div>
<div style="position:absolute;left:283px;top:580px;width:170px;height:21px;background:#2a2a2a;font-size:12px;line-height:23px;color:#ececec;text-align:center">Type</div>
<div style="position:absolute;left:454px;top:580px;width:310px;height:21px;background:#2a2a2a;font-size:12px;line-height:23px;color:#ececec;text-align:center">Data</div>
<div style="position:absolute;left:765px;top:580px;width:489px;height:21px;background:#2a2a2a;font-size:12px;line-height:23px;color:#ececec;text-align:center">Error</div>
<div style="position:absolute;left:2px;top:602px;width:109px;height:17px;background:#2a2a2a;font-size:12px;line-height:17px;color:#4ab6c6;text-align:center">1</div>
<div style="position:absolute;left:112px;top:602px;width:170px;height:17px;background:#2a2a2a;font-size:12px;line-height:17px;color:#4ab6c6;text-align:center">-1.85003ms</div>
<div style="position:absolute;left:283px;top:602px;width:170px;height:17px;background:#2a2a2a;font-size:12px;line-height:17px;color:#4ab6c6;text-align:center">Right CH</div>
<div style="position:absolute;left:454px;top:602px;width:310px;height:17px;background:#2a2a2a;font-size:12px;line-height:17px;color:#4ab6c6;text-align:center">0x6E</div>
<div style="position:absolute;left:765px;top:602px;width:489px;height:17px;background:#2a2a2a;font-size:12px;line-height:17px;color:#4ab6c6;text-align:center"></div>
<div style="position:absolute;left:2px;top:620px;width:109px;height:18px;background:#151515;font-size:12px;line-height:18px;color:#ececec;text-align:center">2</div>
<div style="position:absolute;left:112px;top:620px;width:170px;height:18px;background:#151515;font-size:12px;line-height:18px;color:#ececec;text-align:center">-1.35003ms</div>
<div style="position:absolute;left:283px;top:620px;width:170px;height:18px;background:#151515;font-size:12px;line-height:18px;color:#ececec;text-align:center">Left CH</div>
<div style="position:absolute;left:454px;top:620px;width:310px;height:18px;background:#151515;font-size:12px;line-height:18px;color:#ececec;text-align:center">0xB7</div>
<div style="position:absolute;left:765px;top:620px;width:489px;height:18px;background:#151515;font-size:12px;line-height:18px;color:#ececec;text-align:center"></div>
<div style="position:absolute;left:2px;top:639px;width:109px;height:18px;background:#151515;font-size:12px;line-height:18px;color:#ececec;text-align:center">3</div>
<div style="position:absolute;left:112px;top:639px;width:170px;height:18px;background:#151515;font-size:12px;line-height:18px;color:#ececec;text-align:center">-850.027us</div>
<div style="position:absolute;left:283px;top:639px;width:170px;height:18px;background:#151515;font-size:12px;line-height:18px;color:#ececec;text-align:center">Right CH</div>
<div style="position:absolute;left:454px;top:639px;width:310px;height:18px;background:#151515;font-size:12px;line-height:18px;color:#ececec;text-align:center">0xF6</div>
<div style="position:absolute;left:765px;top:639px;width:489px;height:18px;background:#151515;font-size:12px;line-height:18px;color:#ececec;text-align:center"></div>
<div style="position:absolute;left:2px;top:658px;width:109px;height:18px;background:#151515;font-size:12px;line-height:18px;color:#ececec;text-align:center">4</div>
<div style="position:absolute;left:112px;top:658px;width:170px;height:18px;background:#151515;font-size:12px;line-height:18px;color:#ececec;text-align:center">-350.027us</div>
<div style="position:absolute;left:283px;top:658px;width:170px;height:18px;background:#151515;font-size:12px;line-height:18px;color:#ececec;text-align:center">Left CH</div>
<div style="position:absolute;left:454px;top:658px;width:310px;height:18px;background:#151515;font-size:12px;line-height:18px;color:#ececec;text-align:center">0xA7</div>
<div style="position:absolute;left:765px;top:658px;width:489px;height:18px;background:#151515;font-size:12px;line-height:18px;color:#ececec;text-align:center"></div>
<div style="position:absolute;left:2px;top:677px;width:109px;height:18px;background:#151515;font-size:12px;line-height:18px;color:#ececec;text-align:center">5</div>
<div style="position:absolute;left:112px;top:677px;width:170px;height:18px;background:#151515;font-size:12px;line-height:18px;color:#ececec;text-align:center">149.973us</div>
<div style="position:absolute;left:283px;top:677px;width:170px;height:18px;background:#151515;font-size:12px;line-height:18px;color:#ececec;text-align:center">Right CH</div>
<div style="position:absolute;left:454px;top:677px;width:310px;height:18px;background:#151515;font-size:12px;line-height:18px;color:#ececec;text-align:center">0x6E</div>
<div style="position:absolute;left:765px;top:677px;width:489px;height:18px;background:#151515;font-size:12px;line-height:18px;color:#ececec;text-align:center"></div>
<div style="position:absolute;left:2px;top:696px;width:109px;height:18px;background:#151515;font-size:12px;line-height:18px;color:#ececec;text-align:center">6</div>
<div style="position:absolute;left:112px;top:696px;width:170px;height:18px;background:#151515;font-size:12px;line-height:18px;color:#ececec;text-align:center">649.973us</div>
<div style="position:absolute;left:283px;top:696px;width:170px;height:18px;background:#151515;font-size:12px;line-height:18px;color:#ececec;text-align:center">Left CH</div>
<div style="position:absolute;left:454px;top:696px;width:310px;height:18px;background:#151515;font-size:12px;line-height:18px;color:#ececec;text-align:center">0xB7</div>
<div style="position:absolute;left:765px;top:696px;width:489px;height:18px;background:#151515;font-size:12px;line-height:18px;color:#ececec;text-align:center"></div>
<div style="position:absolute;left:2px;top:715px;width:109px;height:18px;background:#151515;font-size:12px;line-height:18px;color:#ececec;text-align:center">7</div>
<div style="position:absolute;left:112px;top:715px;width:170px;height:18px;background:#151515;font-size:12px;line-height:18px;color:#ececec;text-align:center">1.14997ms</div>
<div style="position:absolute;left:283px;top:715px;width:170px;height:18px;background:#151515;font-size:12px;line-height:18px;color:#ececec;text-align:center">Right CH</div>
<div style="position:absolute;left:454px;top:715px;width:310px;height:18px;background:#151515;font-size:12px;line-height:18px;color:#ececec;text-align:center">0xF6</div>
<div style="position:absolute;left:765px;top:715px;width:489px;height:18px;background:#151515;font-size:12px;line-height:18px;color:#ececec;text-align:center"></div>
<div style="position:absolute;left:1256px;top:580px;width:23px;height:21px;background:#262626"><svg width="23" height="21"><path d="M5 4L18 17M18 4L5 17" stroke="#4a4a4a" stroke-width="1.5"/></svg></div>
<div style="position:absolute;left:1256px;top:603px;width:23px;height:23px;background:#141414"><svg width="23" height="23"><path d="M3 16L11.5 8L20 16" fill="none" stroke="#f4f4f4" stroke-width="2.2"/></svg></div>
<div style="position:absolute;left:1256px;top:626px;width:23px;height:83px;background:#222"></div>
<div style="position:absolute;left:1258px;top:627px;width:20px;height:46px;background:#353535"></div>
<div style="position:absolute;left:1256px;top:709px;width:23px;height:24px;background:#141414"><svg width="23" height="24"><path d="M3 7L11.5 15L20 7" fill="none" stroke="#f4f4f4" stroke-width="2.2"/></svg></div>
<div style="position:absolute;left:0;top:734px;width:1280px;height:66px;background:#121212"></div>
<div style="position:absolute;left:0;top:734px;width:1280px;height:1px;background:#262626"></div>
<div style="position:absolute;left:4px;top:740px;width:100px;height:56px;background:#3c3c3c;border-radius:2px"></div>
<div style="position:absolute;left:41px;top:741px;width:62px;height:17px;background:#1e1e1e;border-radius:2px"><span style="position:absolute;right:3px;top:0px;font-size:11px;line-height:16px;color:#e8e800">DC1M</span></div>
<div style="position:absolute;left:6px;top:742px;width:33px;height:16px;background:#ffff00;border-radius:3px;font-size:13px;line-height:17px;color:#000;text-align:center">C1</div>
<div style="position:absolute;left:7px;top:760px;font-size:12px;line-height:16px;color:#e8e800">1X</div>
<div style="position:absolute;left:4px;top:760px;width:97px;text-align:right;font-size:12px;line-height:16px;color:#ececec">2.00V/</div>
<div style="position:absolute;left:7px;top:777px;font-size:12px;line-height:16px;color:#e8e800">FULL</div>
<div style="position:absolute;left:4px;top:777px;width:97px;text-align:right;font-size:12px;line-height:16px;color:#ececec">4.10V</div>
<div style="position:absolute;left:108px;top:740px;width:100px;height:56px;background:#3c3c3c;border-radius:2px"></div>
<div style="position:absolute;left:145px;top:741px;width:62px;height:17px;background:#1e1e1e;border-radius:2px"><span style="position:absolute;right:3px;top:0px;font-size:11px;line-height:16px;color:#e8108a">DC50</span></div>
<div style="position:absolute;left:110px;top:742px;width:33px;height:16px;background:#ff0090;border-radius:3px;font-size:13px;line-height:17px;color:#000;text-align:center">C2</div>
<div style="position:absolute;left:111px;top:760px;font-size:12px;line-height:16px;color:#e8108a">1X</div>
<div style="position:absolute;left:108px;top:760px;width:97px;text-align:right;font-size:12px;line-height:16px;color:#ececec">200mV/</div>
<div style="position:absolute;left:111px;top:777px;font-size:12px;line-height:16px;color:#e8108a">FULL</div>
<div style="position:absolute;left:108px;top:777px;width:97px;text-align:right;font-size:12px;line-height:16px;color:#ececec">-116mV</div>
<div style="position:absolute;left:212px;top:740px;width:100px;height:56px;background:#3c3c3c;border-radius:2px"></div>
<div style="position:absolute;left:249px;top:741px;width:62px;height:17px;background:#1e1e1e;border-radius:2px"><span style="position:absolute;right:3px;top:0px;font-size:11px;line-height:16px;color:#10e0f0">DC1M</span></div>
<div style="position:absolute;left:214px;top:742px;width:33px;height:16px;background:#00f0ff;border-radius:3px;font-size:13px;line-height:17px;color:#000;text-align:center">C3</div>
<div style="position:absolute;left:215px;top:760px;font-size:12px;line-height:16px;color:#10e0f0">1X</div>
<div style="position:absolute;left:212px;top:760px;width:97px;text-align:right;font-size:12px;line-height:16px;color:#ececec">2.00V/</div>
<div style="position:absolute;left:215px;top:777px;font-size:12px;line-height:16px;color:#10e0f0">FULL</div>
<div style="position:absolute;left:212px;top:777px;width:97px;text-align:right;font-size:12px;line-height:16px;color:#ececec">-3.78V</div>
<div style="position:absolute;left:316px;top:740px;width:100px;height:55px;border:1px dotted #8a8a8a"></div>
<div style="position:absolute;left:340px;top:768px;width:52px;height:1px;background:#7a7a7a"></div>
<div style="position:absolute;left:366px;top:753px;width:1px;height:30px;background:#7a7a7a"></div>
<div style="position:absolute;left:947px;top:740px;width:1px;height:56px;background:#2c2c2c"></div>
<div style="position:absolute;left:952px;top:740px;width:130px;height:56px;background:#3c3c3c;border-radius:2px"></div>
<div style="position:absolute;left:952px;top:740px;width:130px;height:18px;background:#1e1e1e;border-radius:2px 2px 0 0"></div>
<div style="position:absolute;left:956px;top:741px;font-size:13px;line-height:17px;color:#ececec">Timebase</div>
<div style="position:absolute;left:955px;top:760px;font-size:13px;line-height:17px;color:#ececec">74.9us</div>
<div style="position:absolute;left:952px;top:760px;width:127px;text-align:right;font-size:13px;line-height:17px;color:#ececec">500us/div</div>
<div style="position:absolute;left:955px;top:776px;font-size:13px;line-height:17px;color:#ececec">2.50Mpts</div>
<div style="position:absolute;left:952px;top:776px;width:127px;text-align:right;font-size:13px;line-height:17px;color:#ececec">500MSa/s</div>
<div style="position:absolute;left:1086px;top:740px;width:110px;height:56px;background:#3c3c3c;border-radius:2px"></div>
<div style="position:absolute;left:1086px;top:740px;width:110px;height:18px;background:#1e1e1e;border-radius:2px 2px 0 0"></div>
<div style="position:absolute;left:1090px;top:741px;font-size:13px;line-height:17px;color:#ececec">Trigger</div>
<div style="position:absolute;left:1090px;top:760px;font-size:13px;line-height:17px;color:#ececec">Auto</div>
<div style="position:absolute;left:1090px;top:776px;font-size:13px;line-height:17px;color:#ececec">Stop</div>
<div style="position:absolute;left:1200px;top:740px;width:80px;height:56px;background:#242424"></div>
<svg width="10" height="10" style="position:absolute;left:1254px;top:740px"><path d="M2.5 1.5H7.5V8.5H2.5Z" fill="none" stroke="#9a9a9a" stroke-width="1"/></svg>
<div style="position:absolute;left:1200px;top:763px;width:80px;text-align:center;font-size:13px;line-height:17px;color:#ececec">06:00:34</div>
<svg width="130" height="30" viewBox="1150 768 130 30" style="position:absolute;left:1150px;top:768px"><path d="M1155 773h7M1155 775.5h7M1155 778h7M1156.5 772v7M1160 772v7" stroke="#262626" stroke-width="1.1" fill="none"/><path d="M1165 773h7M1165 775.5h7M1165 778h7M1166.5 772v7M1170 772v7" stroke="#262626" stroke-width="1.1" fill="none"/><path d="M1186 773h7M1186 775.5h7M1186 778h7M1187.5 772v7M1191 772v7" stroke="#262626" stroke-width="1.1" fill="none"/><path d="M1199 773h7M1199 775.5h7M1199 778h7M1200.5 772v7M1204 772v7" stroke="#262626" stroke-width="1.1" fill="none"/><path d="M1216 773h7M1216 775.5h7M1216 778h7M1217.5 772v7M1221 772v7" stroke="#262626" stroke-width="1.1" fill="none"/><path d="M1229 773h7M1229 775.5h7M1229 778h7M1230.5 772v7M1234 772v7" stroke="#262626" stroke-width="1.1" fill="none"/><path d="M1247 773h7M1247 775.5h7M1247 778h7M1248.5 772v7M1252 772v7" stroke="#262626" stroke-width="1.1" fill="none"/><path d="M1258 773h7M1258 775.5h7M1258 778h7M1259.5 772v7M1263 772v7" stroke="#262626" stroke-width="1.1" fill="none"/><rect x="1180.5" y="774.5" width="2" height="2" fill="#262626"/><rect x="1211" y="774.5" width="2" height="2" fill="#262626"/><rect x="1241" y="774.5" width="2" height="2" fill="#262626"/><text x="1155" y="790" font-family="Liberation Sans" font-style="italic" font-size="12" fill="#262626" letter-spacing="1">www.accexp.cn</text></svg>
<div style="position:absolute;left:1086px;top:777px;width:107px;text-align:right;font-size:13px;line-height:17px;color:#ececec">I2S</div>
<div style="position:absolute;left:1200px;top:779px;width:80px;text-align:center;font-size:13px;line-height:17px;color:#ececec">2021/10/18</div>
<svg width="220" height="60" viewBox="1060 740 220 60" style="position:absolute;left:1060px;top:740px">
<defs><linearGradient id="lg" x1="0" y1="747" x2="0" y2="789" gradientUnits="userSpaceOnUse"><stop offset="0" stop-color="#f28000"/><stop offset="0.55" stop-color="#e3061a"/><stop offset="1" stop-color="#9c0c12"/></linearGradient></defs>
<path fill-rule="evenodd" fill="url(#lg)" d="M1066.8 788.7C1072 781 1080 769 1087.2 760.2C1091 755.5 1096 750.8 1101 749.4C1106 747.8 1112 747.3 1128.7 747.2C1124 757 1119 766 1115.5 774.5C1116.5 776 1119 776.5 1122 776.2C1130 775 1140 770.5 1149.8 766.9C1147 772 1143 780 1138.5 789H1091.5L1093.5 780.5H1087.6L1083 789Z M1090.7 773.5C1093 768 1097 762 1101.5 759.8C1104 758.8 1107 758.4 1109.7 758.4C1107.5 763 1104.5 768 1102 773.5Z"/>
<g transform="translate(1093 789.5) skewX(-12)"><text x="0" y="0" font-family="Liberation Sans" font-weight="700" font-size="14.5" fill="#ffffff" stroke="#ffffff" stroke-width="0.7" letter-spacing="-1">CCEXP</text></g>
<g fill="#e8001c">
<rect x="1155" y="749" width="25" height="2.8"/>
<rect x="1159" y="747" width="3.8" height="6.2"/>
<rect x="1171.7" y="747" width="4.2" height="6.2"/>
<path d="M1156.5 754.5L1159.5 754.3L1180 766.3L1179 768L1175 768L1157 756.5Z"/>
<path d="M1176 754L1178.5 755L1158.5 767.8L1155 768L1155.5 765.5Z"/>
<rect x="1184" y="749" width="25" height="2.8"/>
<rect x="1195" y="747" width="3.9" height="7"/>
<path fill-rule="evenodd" d="M1185.3 753.9H1207.8V762.8H1185.3Z M1189.5 757.3H1203.5V760.2H1189.5Z"/>
<path d="M1186.5 762.5L1190 762.5L1188.5 768H1185Z"/>
<path d="M1198.3 762.5H1202.6V764.6H1209.3V768H1198.3Z"/>
<rect x="1224" y="747" width="4" height="2.5"/>
<rect x="1213.5" y="749" width="24.5" height="3"/>
<rect x="1213.5" y="749" width="3" height="5"/>
<rect x="1235" y="749" width="3" height="5"/>
<rect x="1216" y="753.3" width="20" height="2"/>
<rect x="1215.5" y="756" width="21" height="2"/>
<rect x="1213" y="758.5" width="25" height="2.4"/>
<rect x="1219.5" y="752" width="3.5" height="10"/>
<rect x="1229" y="752" width="3.5" height="10"/>
<path fill-rule="evenodd" d="M1217 761.2H1235V766H1217Z M1220 762.8H1232V764.3H1220Z"/>
<path d="M1223 765L1226 765.5L1216 768.2L1213.5 767.5Z"/>
<path d="M1228.5 765.5L1231 765L1238.2 767.5L1236 768.2Z"/>
<rect x="1252.5" y="747" width="2.5" height="2.2"/>
<rect x="1258" y="747" width="2.5" height="2.2"/>
<rect x="1243" y="749" width="24" height="2.4"/>
<rect x="1243" y="755.8" width="24" height="2.2"/>
<rect x="1246" y="751.5" width="3" height="4.5"/>
<rect x="1251.5" y="751" width="3" height="5"/>
<rect x="1256.5" y="751" width="3" height="5"/>
<rect x="1262" y="751.5" width="3" height="4.5"/>
<path fill-rule="evenodd" d="M1243.8 759H1266V768H1243.8Z M1248 761H1261.5V762.3H1248Z M1248 764H1261.5V765.3H1248Z"/>
</g>
</svg>
</div></body></html>
